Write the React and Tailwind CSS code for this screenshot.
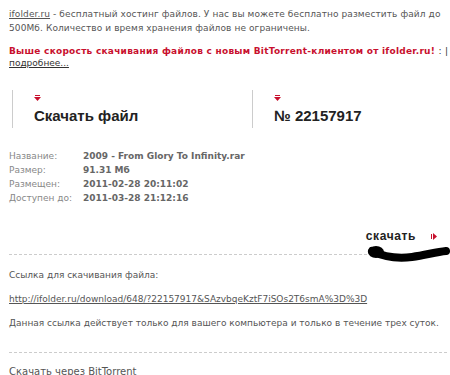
import React from "react";

function DownArrow() {
  return (
    <svg width="7" height="6" viewBox="0 0 7 6" className="block">
      <rect x="1" y="0" width="5" height="1" fill="#c8102e" />
      <path d="M0 2 H7 L3.5 6 Z" fill="#c8102e" />
    </svg>
  );
}

function RightArrow() {
  return (
    <svg width="6" height="7" viewBox="0 0 6 7" className="block">
      <rect x="0" y="1" width="1" height="5" fill="#c8102e" />
      <path d="M2 0 V7 L6 3.5 Z" fill="#c8102e" />
    </svg>
  );
}

export default function App() {
  const info = [
    ["Название:", "2009 - From Glory To Infinity.rar"],
    ["Размер:", "91.31 Мб"],
    ["Размещен:", "2011-02-28 20:11:02"],
    ["Доступен до:", "2011-03-28 21:12:16"],
  ];

  return (
    <div className="w-[450px] h-[375px] overflow-hidden bg-white font-['DejaVu_Sans',sans-serif] text-[9px] text-[#555]">
      <div className="pl-[9px] pr-[3px] pt-[7px]">
        {/* intro */}
        <p className="leading-[14px] tracking-[0.1px]">
          <span className="underline">ifolder.ru</span> - бесплатный хостинг файлов. У нас вы можете бесплатно разместить файл до
          500Мб. Количество и время хранения файлов не ограничены.
        </p>
        <p className="mt-[10px] leading-[12px] font-bold text-[#c8102e] whitespace-nowrap tracking-[0.25px]">
          Выше скорость скачивания файлов с новым BitTorrent-клиентом от ifolder.ru!{" "}
          <span className="font-normal text-[#333]">: |</span>
        </p>
        <p className="leading-[12px] text-[#333] underline">подробнее...</p>

        {/* headings */}
        <div className="mt-[21px] flex">
          <div className="w-[240px] ml-[3px] border-l border-[#ccc] h-[38px] pl-[21px] pt-[5px]">
            <DownArrow />
            <div className="mt-[6px] font-['Liberation_Sans',sans-serif] font-bold text-[15px] leading-[18px] text-[#222]">
              Скачать файл
            </div>
          </div>
          <div className="border-l border-[#ccc] h-[38px] pl-[21px] pt-[5px]">
            <DownArrow />
            <div className="mt-[6px] font-['Liberation_Sans',sans-serif] font-bold text-[15px] leading-[18px] text-[#222]">
              № 22157917
            </div>
          </div>
        </div>

        {/* info */}
        <div className="mt-[21px] flex flex-col">
          {info.map(([k, v]) => (
            <div key={k} className="flex leading-[14px]">
              <span className="w-[74px] text-[#888]">{k}</span>
              <span className="font-bold text-[#666]">{v}</span>
            </div>
          ))}
        </div>

        {/* download button */}
        <div className="mt-[22px] h-[18px] flex justify-end items-center pr-[10px] gap-[15px]">
          <span className="font-['Liberation_Sans',sans-serif] font-bold text-[12px] leading-[18px] tracking-[0.6px] text-[#222]">
            скачать
          </span>
          <RightArrow />
        </div>
        <div className="relative mt-[9px] border-t border-dashed border-[#ccc]">
          <svg
            width="90"
            height="24"
            viewBox="0 0 90 24"
            className="absolute left-[355px] top-[-13px]"
          >
            <path
              d="M8 9 C 18 14, 32 17, 48 15 C 62 13, 72 10, 82 9"
              stroke="#000"
              strokeWidth="8"
              strokeLinecap="round"
              fill="none"
            />
            <ellipse cx="12" cy="10" rx="8" ry="6" fill="#000" />
          </svg>
        </div>

        {/* link */}
        <p className="mt-[13px] leading-[14px]">Ссылка для скачивания файла:</p>
        <p className="mt-[10px] leading-[14px] underline">
          http://ifolder.ru/download/648/?22157917&SAzvbqeKztF7iSOs2T6smA%3D%3D
        </p>
        <p className="mt-[10px] leading-[14px]">
          Данная ссылка действует только для вашего компьютера и только в течение трех суток.
        </p>
        <div className="mt-[22px] border-t border-dashed border-[#ccc]" />
        <p className="mt-[12px] text-[10px] leading-[14px]">Скачать через BitTorrent</p>
      </div>
    </div>
  );
}
